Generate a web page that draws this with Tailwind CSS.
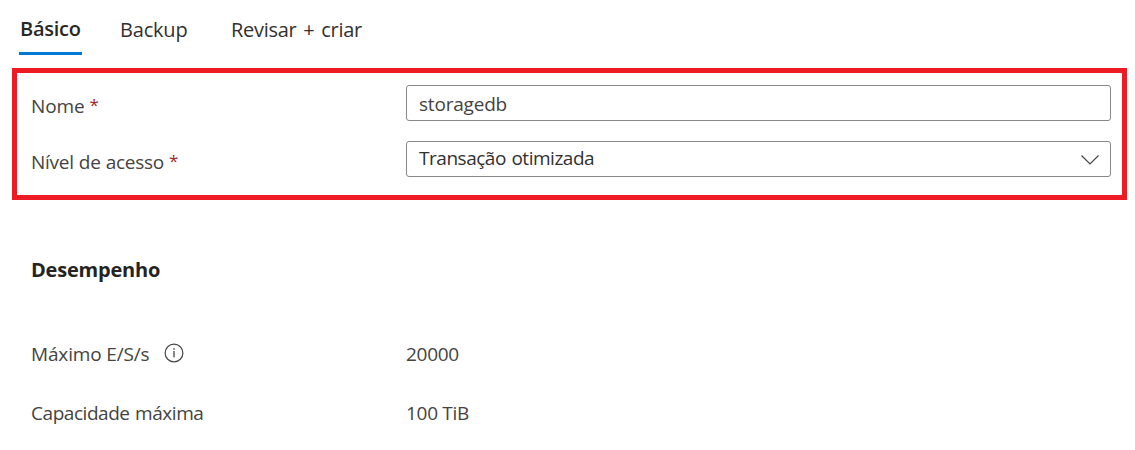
<!DOCTYPE html>
<html lang="pt-BR">
<head>
<meta charset="utf-8">
<title>Novo compartilhamento</title>
<script src="https://cdn.jsdelivr.net/npm/@tailwindcss/browser@4"></script>
</head>
<body class="h-[450px] overflow-hidden bg-white font-['Open_Sans',sans-serif] text-[19px] leading-6 text-[#444342]">
<nav class="flex h-[55px] items-start pl-[19px] pt-[17px] text-[20px] text-[#323130]">
  <a class="h-[38px] w-[63px] whitespace-nowrap border-b-3 border-[#0078d4] pl-[1px] font-semibold text-[#292827]"><span class="tracking-[-0.25px]">Básico</span></a>
  <a class="ml-[38px] w-[67px] whitespace-nowrap pt-px"><span class="tracking-[-0.2px]">Backup</span></a>
  <a class="ml-[44px] whitespace-nowrap pt-px"><span class="tracking-[-0.3px] [word-spacing:2px]">Revisar + criar</span></a>
</nav>
<form class="ml-3 mt-[13px] flex h-[132px] w-[1115px] flex-col gap-5 border-5 border-[#ed1c24] pl-[14px] pt-3">
  <div class="flex h-9">
    <label class="flex w-[375px] gap-[5px] pt-[9px]"><span class="tracking-[-0.1px]">Nome</span><span class="-mt-px text-[17px] text-[#a4262c]">*</span></label>
    <div class="h-9 w-[705px] rounded-[3px] border border-[#8a8886] pl-3 pt-[6px]"><span class="tracking-[-0.2px]">storagedb</span></div>
  </div>
  <div class="flex h-9">
    <label class="flex w-[375px] gap-[5px] pt-[9px]"><span class="tracking-[-0.28px] [word-spacing:0.5px]">Nível de acesso</span><span class="-mt-px text-[17px] text-[#a4262c]">*</span></label>
    <div class="flex h-9 w-[705px] justify-between rounded-[3px] border border-[#8a8886] pl-3 pr-[11px] pt-[4px] text-[#323130]"><span class="tracking-[-0.47px] [word-spacing:1px]">Transação otimizada</span>
      <svg class="mt-[9px] h-[11px] w-[18px]" viewBox="0 0 18 11" fill="none" stroke="#484644" stroke-width="1.2"><path d="M.5 .5 9 9 17.5 .5"/></svg>
    </div>
  </div>
</form>
<main class="pl-[31px]">
  <h2 class="mt-[58px] text-[20px] font-bold text-[#252423]"><span class="tracking-[-0.2px]">Desempenho</span></h2>
  <div class="mt-[60px] flex h-6">
    <div class="flex w-[375px] items-center"><span class="tracking-[-0.15px]">Máximo E/S/s</span>
      <svg class="-mt-[2px] ml-[14px] size-5" viewBox="0 0 20 20" fill="none" stroke="#484644"><circle cx="10" cy="10" r="8.9" stroke-width="1.2"/><path d="M10 8v6.3" stroke-width="1.3"/><path d="M10 5.3v1.4" stroke-width="1.4"/></svg>
    </div>
    <span class="tracking-[-0.3px]">20000</span>
  </div>
  <div class="mt-[35px] flex h-6">
    <div class="w-[375px]"><span class="tracking-[-0.45px] [word-spacing:1px]">Capacidade máxima</span></div>
    <span class="tracking-[-0.3px]">100 TiB</span>
  </div>
</main>
</body>
</html>
